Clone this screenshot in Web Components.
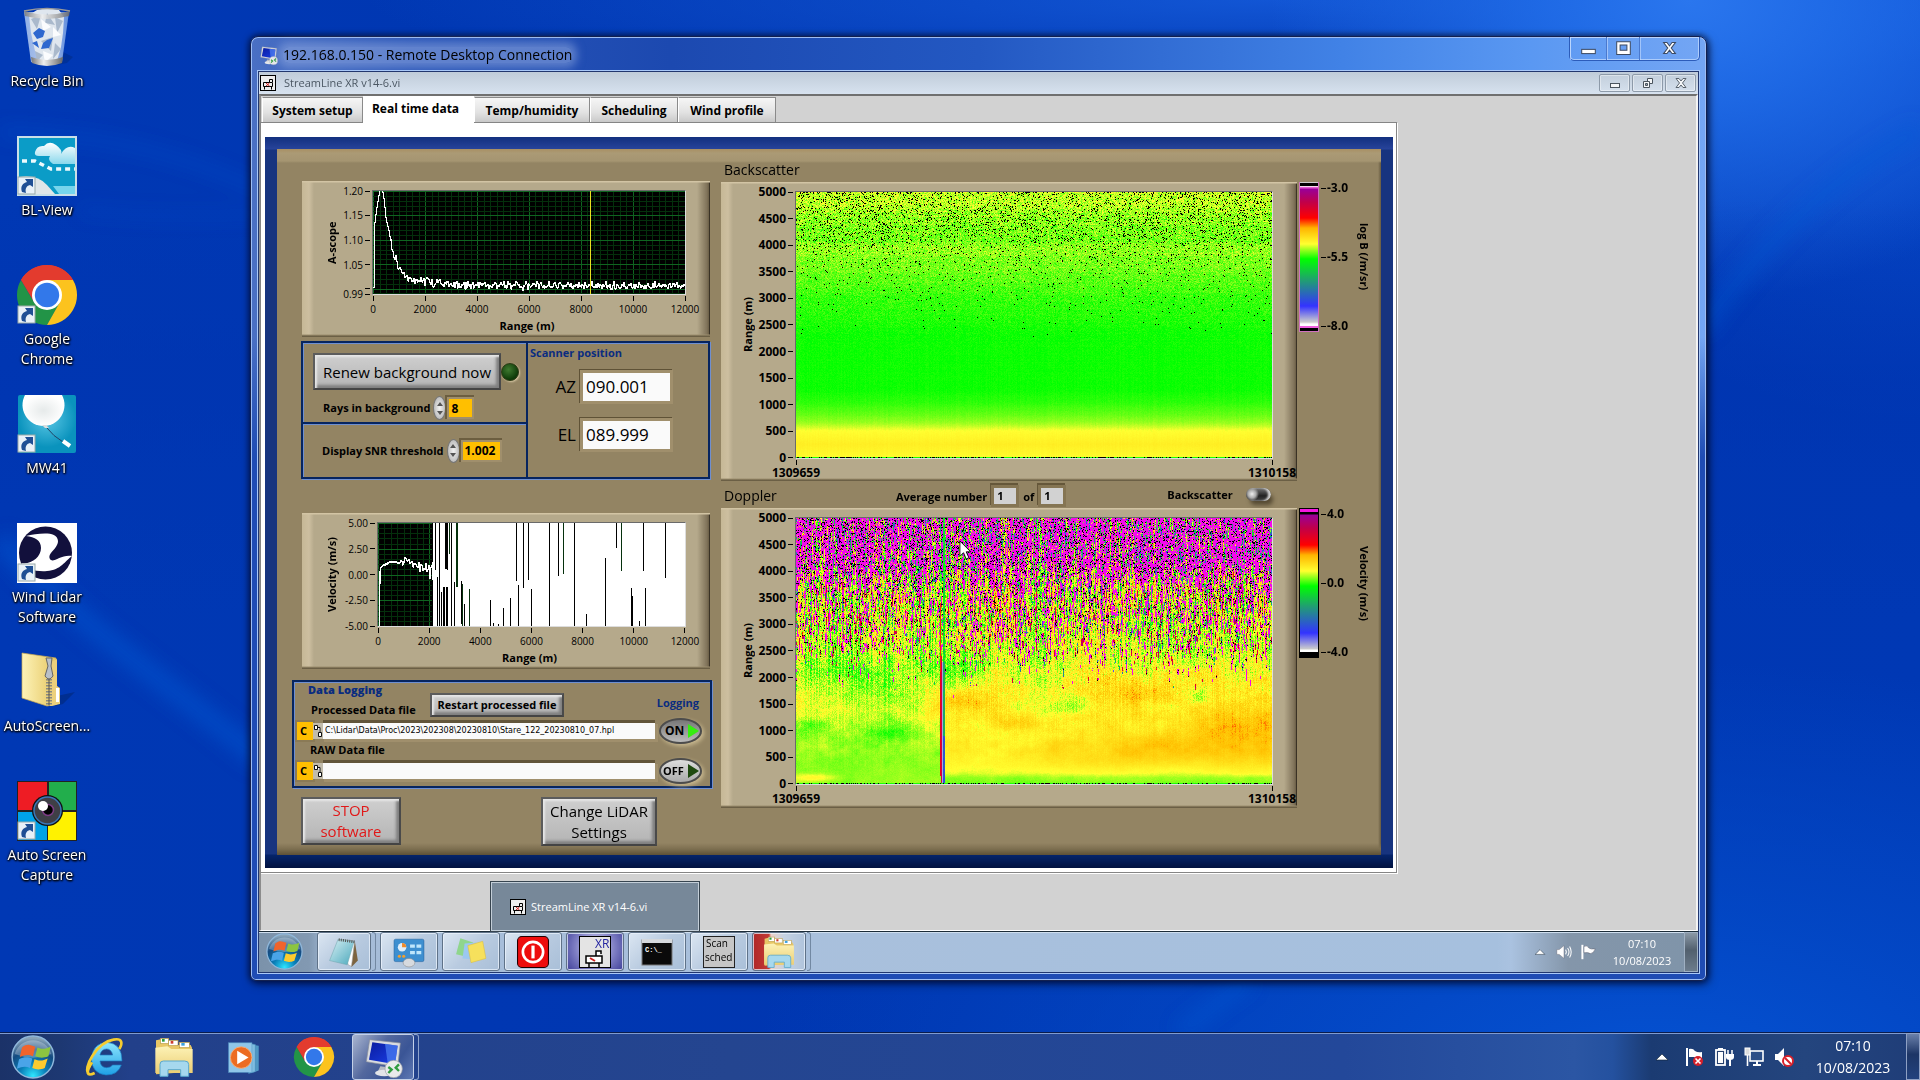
<!DOCTYPE html>
<html lang="en">
<head>
<meta charset="utf-8">
<title>Remote Desktop Connection</title>
<style>
html,body{margin:0;height:100%;overflow:hidden;background:#0038b2}
body{font-family:"Open Sans","Noto Sans",sans-serif;font-size:14px;color:#000}
</style>
</head>
<body>
<desktop-shell></desktop-shell>
<script>
const define = (name, css, html, setup) => {
  const tpl = document.createElement('template');
  customElements.define(name, class extends HTMLElement {
    connectedCallback() {
      if (this.shadowRoot) return;
      tpl.innerHTML = '<style>*{box-sizing:border-box}' + css + '</style>' + (typeof html === 'function' ? html(this) : html);
      this.attachShadow({mode: 'open'}).append(tpl.content.cloneNode(true));
      if (setup) setup(this, this.shadowRoot);
    }
  });
};
const hash = (x, y, s = 0) => {
  let h = (x * 374761393 + y * 668265263 + s * 1442695041) | 0;
  h = Math.imul(h ^ (h >>> 13), 1274126177);
  h = Math.imul(h ^ (h >>> 15), 2246822519 | 0);
  return ((h ^ (h >>> 16)) >>> 0) / 4294967296;
};
const smooth = (x, y, s) => {
  const xi = Math.floor(x), yi = Math.floor(y), a = x - xi, b = y - yi;
  const u = a * a * (3 - 2 * a), v = b * b * (3 - 2 * b);
  return (hash(xi, yi, s) * (1 - u) + hash(xi + 1, yi, s) * u) * (1 - v) + (hash(xi, yi + 1, s) * (1 - u) + hash(xi + 1, yi + 1, s) * u) * v;
};
const lerp = (pts, x) => {
  if (x <= pts[0][0]) return pts[0][1];
  for (let i = 1; i < pts.length; i++) if (x <= pts[i][0]) {
    const [x0, y0] = pts[i - 1], [x1, y1] = pts[i];
    return y0 + (y1 - y0) * (x - x0) / (x1 - x0);
  }
  return pts[pts.length - 1][1];
};

/* ---------- icons ---------- */
const arrow = '<g><rect x="1" y="41" width="17" height="17" fill="#e8f1f8" stroke="#9aa" /><path d="M5 56C3 50 6 47 10 46L8 43L16 43L16 51L13 49C9 50 8 53 9 57Z" fill="#1f4f94"/></g>';
const chrome = '<path d="M30 30L4 15A30 30 0 0 1 56 15Z" fill="#e33b2e"/><path d="M4 15A30 30 0 0 0 30 60L43 37.500L30 30L17 37Z" fill="#229447"/><path d="M56 15A30 30 0 0 1 30 60L43 37L43 22L30 15Z" fill="#fcc31e"/><path d="M4 15A30 30 0 0 1 56 15L30 15L17 37Z" fill="#e33b2e"/><circle cx="30" cy="30" r="15" fill="#fff"/><circle cx="30" cy="30" r="12.200" fill="#3278ea"/>';
const folder = '<path d="M3 5L12 3L14 7L30 8L32 12L55 12L57 16V52L3 56Z" fill="#e8c766"/><rect x="10" y="2" width="12" height="8" fill="#fff" stroke="#b99a40"/><rect x="22" y="5" width="14" height="8" fill="#fff" stroke="#b99a40"/><rect x="38" y="8" width="15" height="8" fill="#fff" stroke="#b99a40"/><rect x="12" y="3" width="4" height="4" fill="#2a9c3c"/><rect x="25" y="6" width="4" height="4" fill="#d03c30"/><rect x="41" y="9" width="5" height="4" fill="#3aa0e0"/><path d="M2 16L20 14L26 18H58V54H2Z" fill="url(#fo)"/><path d="M9 59V41Q9 36 14 36H46Q52 36 52 41V59H40V49H21V59Z" fill="#a6d8ee" stroke="#5aa8cc" stroke-width="1.500"/>';
const flag = '<path d="M14 19C22 13 25 16 32 18L29 31C22 28 18 29 11 32Z" fill="#f0642c"/><path d="M35 19C42 22 46 21 53 18L50 31C42 34 38 33 32 31Z" fill="#8cc540"/><path d="M10 35C18 31 22 32 28 34L25 47C19 44 14 45 7 48Z" fill="#4aa4e8"/><path d="M31 35C38 38 43 37 49 34L45 47C38 50 33 49 28 47Z" fill="#fccb2e"/>';
const monitor = '<path d="M26 44L42 46L44 54L22 52Z" fill="#b8bcc4"/><ellipse cx="32" cy="54" rx="14" ry="5" fill="#e2e4e8"/><path d="M10 4L56 9L52 45L5 37Z" fill="#d8dbe0" stroke="#8a8e98"/><path d="M14 8L52 13L48 41L9 34Z" fill="url(#mo)"/><path d="M33 10L52 13L48 41L37 39Z" fill="#4a7cf0" opacity=".75"/><circle cx="46" cy="48" r="13" fill="#e9eaec" stroke="#9a9ea4"/><path d="M38 45L43 49L38 54M54 41L49 46L54 51" stroke="#2f9c3f" stroke-width="3.500" fill="none"/>';
const vi = '<rect x=".500" y=".500" width="15" height="15" fill="#eee" stroke="#000"/><path d="M3.500 7.500H12.500V11.500H3.500ZM4.500 11.500V14.500M11.500 11.500V14.500M9.500 7.500V4.500H12.500V7" stroke="#000" fill="none"/><path d="M6 8L9.500 11M9.500 8L6 11" stroke="#d02020"/>';
const ICONS = {
  recycle: [60, '<defs><linearGradient id="b"><stop offset="0" stop-color="#a8c4ee"/><stop offset=".5" stop-color="#d7e4f8"/><stop offset="1" stop-color="#6f9be4"/></linearGradient><linearGradient id="m"><stop offset="0" stop-color="#777"/><stop offset=".4" stop-color="#eee"/><stop offset="1" stop-color="#666"/></linearGradient></defs><path d="M46 45L56 50L50 56L40 58Z" fill="#002a80" opacity=".5"/><path d="M7 5L14 55Q30 61 45 55L52 5Z" fill="url(#b)" opacity=".85"/><path d="M12 8L20 3L30 1L42 3L47 10L46 26L44 40L40 54L24 54L18 44L14 26Z" fill="#dfe6ee"/><path d="M14 12L24 8L20 22ZM30 6L38 18L28 16ZM38 10L46 14L40 26ZM24 34L36 30L34 44ZM18 44L26 48L20 54ZM38 36L44 42L36 52Z" fill="#aab9cc"/><path d="M24 12L34 20L26 24ZM36 20L44 28L36 30ZM26 44L36 48L28 56Z" fill="#fbfcfe"/><path d="M16 26L22 21L28 24L26 30L20 32ZM30 33L36 31L32 41L24 42L26 36ZM15 36L20 34L22 41Z" fill="#2f68cf"/><path d="M7 4Q30 11 53 4L52 9Q30 15 8 9Z" fill="url(#m)" opacity=".85"/><path d="M7 4Q30 -1 53 4" fill="none" stroke="#999" stroke-width="1.500"/><path d="M14 50Q30 56 46 50L45 56Q30 62 15 56Z" fill="url(#m)"/>'],
  blview: [60, '<defs><linearGradient id="c" x2="0" y2="1"><stop offset="0" stop-color="#fff"/><stop offset="1" stop-color="#8ad8ec"/></linearGradient></defs><rect width="60" height="60" fill="#c9dfe8"/><rect x="2" y="2" width="56" height="56" fill="#0b9cc7"/><path d="M18 16Q20 9 27 10Q32 4 39 9Q46 14 44 18Q50 8 58 12V28H36Q30 24 33 20H22Q17 20 18 16Z" fill="url(#c)"/><path d="M5 25H18L34 33H58" stroke="#eefafd" stroke-width="3.500" stroke-dasharray="5 4" fill="none"/><path d="M2 41Q20 38 30 49L38 58H2Z" fill="#dfe6e8"/><path d="M36 50H58V58H42Z" fill="#76d5ec"/>' + arrow],
  chromelink: [60, chrome + arrow], chrome: [60, chrome],
  mw41: [60, '<defs><radialGradient id="w" cx=".5" cy=".4"><stop offset="0" stop-color="#5cc8e6"/><stop offset="1" stop-color="#0a93bd"/></radialGradient><radialGradient id="wb"><stop offset="0" stop-color="#e6eaea"/><stop offset="1" stop-color="#fff"/></radialGradient></defs><rect x="1" y="1" width="58" height="58" rx="2" fill="url(#w)"/><path d="M8 1A21 21 0 1 0 45 1Z" fill="url(#wb)"/><path d="M25 31L28 34L32 34L29 31" fill="#ddd"/><path d="M30 34Q36 42 46 48" stroke="#246" fill="none"/><path d="M46 47L53 52" stroke="#fff" stroke-width="4"/>' + arrow],
  wind: [60, '<rect width="60" height="60" fill="#fff"/><circle cx="28.500" cy="30" r="26.500" fill="#12103c"/><path d="M9 13C20 11 40 7 41 18C41 26 30 30 33 36C36 41 44 31 55 33C48 38 44 47 30 48C20 49 8 46 4 40C14 42 24 34 24 25C24 17 18 14 9 13Z" fill="#fff"/>' + arrow],
  zip: [60, '<defs><linearGradient id="z"><stop offset="0" stop-color="#fdf3b8"/><stop offset="1" stop-color="#e5c560"/></linearGradient></defs><path d="M40 44L58 40L46 52L38 54Z" fill="#00236e" opacity=".5"/><path d="M5 1L39 6L40 52L30 54L5 46Z" fill="url(#z)" stroke="#c9a950" stroke-width=".7"/><path d="M33 54L34 10L40 7V34L43 36V52L35 54Z" fill="#ecd07c"/><rect x="39" y="36" width="3" height="14" fill="#fff"/><path d="M32 27V53" stroke="#8a8a80" stroke-width="6" stroke-dasharray="1.500 1.500"/><path d="M32 27V53" stroke="#555" stroke-width="1"/><path d="M29 6H35L34 14L36 24Q32 30 28 24L31 14Z" fill="#b9c0c8" stroke="#666"/>'],
  capture: [60, '<rect width="60" height="60" fill="#222"/><path d="M1 1H30V29H1Z" fill="#ee1c24"/><path d="M32 1H59V29H32Z" fill="#22ae4c"/><path d="M1 31H30V59H1Z" fill="#00a2e8"/><path d="M31 31H59V59H31Z" fill="#fff200"/><circle cx="30.500" cy="29.500" r="15.500" fill="#111"/><circle cx="30.500" cy="29.500" r="13.500" fill="#3f3f46" stroke="#3b78b8" stroke-width="1.500"/><circle cx="31" cy="29" r="5.500" fill="#000" stroke="#7d3c84" stroke-width="1.500"/><circle cx="26" cy="25" r="5" fill="#fff"/>' + arrow],
  orb: [60, '<defs><radialGradient id="o" cx=".5" cy=".95" r=".9"><stop offset="0" stop-color="#2ee6ff"/><stop offset=".35" stop-color="#0a7fb8"/><stop offset=".7" stop-color="#144a80"/><stop offset="1" stop-color="#8aa4b8"/></radialGradient></defs><circle cx="30" cy="30" r="28.500" fill="url(#o)" stroke="#8fb8dc" stroke-width="2"/><path d="M5 26A26 26 0 0 1 55 26Q30 36 5 26Z" fill="#fff" opacity=".28"/><g transform="translate(1 -2)">' + flag + '</g>'],
  ie: [60, '<defs><linearGradient id="e" x2="0" y2="1"><stop offset="0" stop-color="#8ee6fd"/><stop offset="1" stop-color="#1ea0e6"/></linearGradient></defs><path d="M57 36H24Q25 46 34 46Q40 46 43 42H56Q51 57 33 57Q12 55 11 33Q13 9 35 8Q57 10 57 36ZM24 27H43Q41 18 34 18Q26 18 24 27Z" fill="url(#e)" stroke="#1878c0"/><path d="M12 38C2 54 4 60 16 54M8 56C-4 48 20 8 44 4C58 1 58 10 53 18" fill="none" stroke="#f5cc30" stroke-width="4"/>'],
  folder: [60, '<defs><linearGradient id="fo" x2="0" y2="1"><stop offset="0" stop-color="#fcf2b6"/><stop offset="1" stop-color="#ecce74"/></linearGradient></defs>' + folder],
  wmp: [60, '<path d="M44 8L56 10V54L44 58Z" fill="#4f97c4"/><path d="M38 6L50 8V56L38 59Z" fill="#7fbce0" stroke="#3f85b5"/><rect x="3" y="5" width="41" height="52" fill="#8fc6e8" stroke="#5a9cc8"/><circle cx="25" cy="31" r="19" fill="#ec6c22" stroke="#f9b27c" stroke-width="1.500"/><path d="M18 19L38 31L18 43Z" fill="#fff"/>'],
  rdp: [60, '<defs><linearGradient id="mo" x2="1" y2="1"><stop offset="0" stop-color="#0a1ca0"/><stop offset="1" stop-color="#1a40e8"/></linearGradient></defs>' + monitor],
  vi: [16, vi],
  notepad: [60, '<defs><linearGradient id="n" x2="1" y2="1"><stop offset="0" stop-color="#d8f0f4"/><stop offset="1" stop-color="#4aa8bc"/></linearGradient></defs><path d="M50 8L56 46L44 58L40 50Z" fill="#7c6440"/><path d="M20 6L50 10L44 57L38 54Z" fill="#fff" stroke="#999"/><path d="M19 6L49 10L36 54L3 46Z" fill="url(#n)" stroke="#6fa6b0"/><path d="M20 7L50 11" stroke="#555" stroke-width="5" stroke-dasharray="2 2"/>'],
  control: [60, '<rect x="2" y="6" width="56" height="42" rx="3" fill="#3d8fd0" stroke="#1c5f9c"/><circle cx="17" cy="21" r="8" fill="#dfeefa"/><path d="M17 21V13A8 8 0 0 1 25 21Z" fill="#f08a28"/><path d="M32 16H41V22H32ZM44 16H53V22H44ZM32 28H41V34H32ZM44 28H53V34H44Z" fill="#bfe6fb"/><circle cx="12" cy="38" r="3" fill="#f0a030"/><circle cx="20" cy="38" r="3" fill="#f0a030"/><ellipse cx="30" cy="50" rx="11" ry="8" fill="#d7dade" stroke="#888"/>'],
  notes: [60, '<path d="M10 4L34 12L26 40L2 34Z" fill="#8fd68c"/><path d="M18 14L40 12L42 44L14 42Z" fill="#9cc8f0"/><path d="M24 18L52 10L58 42L30 50Z" fill="#f6e05c" stroke="#d8bc40"/>'],
  power: [60, '<rect x="1" y="1" width="58" height="58" rx="8" fill="#ee0c0c" stroke="#200" stroke-width="2"/><circle cx="30" cy="30" r="19" fill="none" stroke="#fff" stroke-width="5"/><path d="M30 18V42" stroke="#fff" stroke-width="6"/>'],
  xr: [32, '<rect x=".5" y=".5" width="31" height="31" fill="#e4e4e4" stroke="#000"/><text x="16" y="12" font-size="12" font-family="Open Sans" fill="#2222a0">XR</text><path d="M7 20H23V27H7ZM10 27V31M20 27V31M17 20V15H22V18" fill="#fff" stroke="#000" stroke-width="1.500"/><path d="M11 22L16 25" stroke="#c22" stroke-width="2"/>'],
  cmd: [32, '<rect x="1" y="4" width="30" height="25" fill="#0a0a0a" stroke="#777"/><rect x="1" y="3" width="30" height="4" fill="#d5d8dc"/><text x="4" y="16" font-size="7" font-weight="700" font-family="Liberation Mono" fill="#fff">C:\\_</text>'],
  scan: [32, '<rect x=".5" y=".5" width="31" height="31" fill="#c6c6c6" stroke="#222"/><text x="3" y="11" font-size="10" font-family="Open Sans">Scan</text><text x="2" y="25" font-size="10" font-family="Open Sans">sched</text>'],
  up: [20, '<path d="M4 13L10 7L16 13Z" fill="#fff" stroke="#123" stroke-width=".6"/>'],
  flagx: [20, '<path d="M3 1V19" stroke="#fff" stroke-width="2"/><path d="M5 2Q9 1 11 4Q14 6 18 5V11Q14 13 10 10H5Z" fill="#fff"/><circle cx="14" cy="14" r="5" fill="#d8202a"/><path d="M11.500 11.500L16.500 16.500M16.500 11.500L11.500 16.500" stroke="#fff" stroke-width="1.600"/>'],
  flagp: [20, '<path d="M3 1V19" stroke="#fff" stroke-width="2.500"/><path d="M5 3Q9 1 11 5Q14 7 19 6Q17 12 13 12Q10 10 5 11Z" fill="#fff" stroke="#445" stroke-width=".5"/>'],
  battery: [20, '<rect x="2" y="3" width="9" height="15" fill="#26406e" stroke="#fff" stroke-width="1.800"/><rect x="4" y="1" width="5" height="2" fill="#fff"/><rect x="4" y="5" width="5" height="11" fill="#fff"/><path d="M14 3V7M18 3V7" stroke="#fff" stroke-width="1.500"/><path d="M12 7H20V10Q20 13 16 13Q12 13 12 10Z" fill="#fff"/><path d="M16 12V19" stroke="#fff" stroke-width="2"/>'],
  net: [20, '<rect x="6" y="4" width="13" height="10" fill="#2c4f88" stroke="#fff" stroke-width="1.600"/><path d="M9 18H17M13 14V18" stroke="#fff" stroke-width="2"/><rect x="1" y="1" width="5" height="7" fill="#ddd" stroke="#fff"/><path d="M3.500 8V19" stroke="#fff" stroke-width="1.600"/>'],
  mute: [20, '<path d="M1 7H4L10 1V19L4 13H1Z" fill="#fff"/><circle cx="14" cy="14" r="5" fill="#fff" stroke="#d8202a" stroke-width="2"/><path d="M11 11L17 17" stroke="#d8202a" stroke-width="2"/>'],
  sound: [20, '<path d="M1 7H4L10 2V18L4 13H1Z" fill="#fff" stroke="#556" stroke-width=".5"/><path d="M12 7Q14 10 12 13M14.500 5Q18 10 14.500 15M17 3Q21 10 17 17" stroke="#fff" fill="none" stroke-width="1.300"/>'],
  min: [20, '<rect x="2" y="11" width="16" height="5" fill="#fff" stroke="#3c4a62" stroke-width="1.200"/>'],
  max: [20, '<path fill-rule="evenodd" d="M2 2H18V17H2ZM6 6V12H14V6Z" fill="#fff" stroke="#3c4a62" stroke-width="1.200"/>'],
  close: [20, '<path d="M3 3H7L10 7L13 3H17L12 9.500L17 16H13L10 12L7 16H3L8 9.500Z" fill="#fff" stroke="#3c4a62" stroke-width="1.200"/>'],
  smin: [12, '<rect x="1.500" y="6.500" width="9" height="4" fill="#f4f6f8" stroke="#4a545e"/>'],
  restore: [12, '<path d="M5.500 1.500H10.500V6.500H5.500Z" fill="#f4f6f8" stroke="#4a545e"/><path d="M1.500 4.500H7.500V10.500H1.500Z" fill="#f4f6f8" stroke="#4a545e"/><path d="M3.500 6.500H5.500V8.500H3.500Z" fill="#9aa6b4" stroke="#4a545e"/>'],
  sclose: [12, '<path d="M1 1.500H4L6 4L8 1.500H11L7.500 6L11 10.500H8L6 8L4 10.500H1L4.500 6Z" fill="#f4f6f8" stroke="#5a646e"/>'],
  path: [10, '<path d="M1.500 -.5H4.500V3.500H1.500ZM5.500 6.500H8.500V10.500H5.500ZM4.500 1.500H7V6.500" fill="#fff" stroke="#111"/>'],
  cursor: [20, '<path d="M1 0V17L5 13L8 20L11 18.500L8 12H13Z" fill="#fff" stroke="#000" stroke-width="1"/>']
};
define('glyph-icon', ':host{display:block;flex:none}svg{display:block;width:100%;height:100%;overflow:visible}', el => {
  const [s, g] = ICONS[el.getAttribute('name')];
  return `<svg viewBox="0 0 ${s} ${s}" aria-hidden="true">${g}</svg>`;
});

/* ---------- desktop ---------- */
define('desktop-icon', `
:host{display:block;height:129px}
a{display:flex;flex-direction:column;align-items:center;gap:4px;color:#fff;text-decoration:none;font-size:14px;line-height:20px;text-align:center;text-shadow:0 1px 2px #000,1px 1px 2px #000,0 0 3px #001}
glyph-icon{width:60px;height:60px}`,
el => `<a href="#"><glyph-icon name="${el.getAttribute('icon')}"></glyph-icon><span><slot></slot></span></a>`);

define('desktop-shell', `
:host{position:relative;display:flex;flex-direction:column;height:100vh;overflow:hidden;
background:linear-gradient(180deg,transparent 200px,rgba(0,52,176,.55) 380px,transparent 620px),
radial-gradient(420px 300px at 88% 0,#2a76ee 0,rgba(35,112,235,.8) 35%,rgba(10,80,210,0) 100%),
radial-gradient(900px 90px at 66% 0,rgba(24,96,224,.75),transparent),
radial-gradient(460px 420px at 100% 0,rgba(14,84,216,.85),transparent),
radial-gradient(900px 420px at 86% 100%,#0552d2 0,rgba(3,74,200,.8) 40%,transparent 100%),
linear-gradient(90deg,#0038b4,#0036b0 50%,#0038b4)}
.sky{position:absolute;inset:0;width:100%;height:100%}
main{position:relative;flex:1;min-height:0}
nav{width:94px;padding-top:7px}
remote-window{position:absolute;inset:36px 213px 51px 250px}`,
`<svg class="sky" viewBox="0 0 1920 1080" preserveAspectRatio="none" aria-hidden="true">
<defs><filter id="s"><feGaussianBlur stdDeviation="9"/></filter></defs>
<g filter="url(#s)" fill="none" stroke="#0c5cd8"><path d="M0 132Q140 134 260 190" stroke-width="8" opacity=".35"/><path d="M0 540C60 610 150 670 262 760" stroke-width="22" opacity=".45"/><path d="M80 210Q160 220 260 214" stroke-width="6" opacity=".25"/><path d="M1700 330Q1800 190 1920 130" stroke-width="20" opacity=".35"/><path d="M1180 1032Q1220 1000 1250 980" stroke-width="14" opacity=".4"/></g></svg>
<main><nav aria-label="Desktop">
<desktop-icon icon="recycle">Recycle Bin</desktop-icon>
<desktop-icon icon="blview">BL-View</desktop-icon>
<desktop-icon icon="chromelink">Google<br>Chrome</desktop-icon>
<desktop-icon icon="mw41">MW41</desktop-icon>
<desktop-icon icon="wind">Wind Lidar<br>Software</desktop-icon>
<desktop-icon icon="zip">AutoScreen...</desktop-icon>
<desktop-icon icon="capture">Auto Screen<br>Capture</desktop-icon>
</nav><remote-window></remote-window></main><host-taskbar></host-taskbar>`);

define('host-taskbar', `
:host{position:relative;display:flex;height:48px;align-items:stretch;color:#fff;border-top:1px solid #0a1c4c;box-shadow:inset 0 1px #7f9bd0;
background:linear-gradient(90deg,#1b3268 0,#1d3872 60px,#22408a 130px,#244590 38%,#23489a 70%,#2b56a4 82%,#24519f 84%,#1b3b72 86%,#24457e 94%,#1f3d78)}
button{border:0;padding:0;background:none;display:flex;align-items:center;justify-content:center;color:inherit;font:inherit}
.apps{display:flex;padding-left:11px;align-items:center}
.orb{width:44px}.orb glyph-icon{width:44px;height:44px}
.pin{width:70px}.pin glyph-icon{width:40px;height:40px}
.pin.first{margin-left:14px}
.pin .small{width:34px;height:34px}
.active{width:62px;height:46px;margin-left:3px;border:1px solid #c3d0e8;border-radius:3px;background:linear-gradient(125deg,#a9b5d0,#53689e 40%,#3a5596 70%,#5f79b4)}
.active glyph-icon{width:40px;height:40px}
.stack{width:5px;height:46px;border:solid #8ea3cc;border-width:1px 1px 1px 0;border-radius:0 3px 3px 0}
.tray{margin-left:auto;display:flex;align-items:center;gap:10px}
.tray glyph-icon{width:20px;height:20px}
.tray .upi{margin-right:2px}
time{width:98px;margin-right:-6px;text-align:center;font-size:14px;line-height:22px}
.show{width:14px;align-self:stretch;border:1px solid #8ea0c4;background:linear-gradient(#6a80aa,#1d3566 45%,#22427e)}`,
`<div class="apps"><button class="orb" aria-label="Start"><glyph-icon name="orb"></glyph-icon></button>
<button class="pin first" aria-label="Internet Explorer"><glyph-icon name="ie"></glyph-icon></button>
<button class="pin" aria-label="Explorer"><glyph-icon name="folder"></glyph-icon></button>
<button class="pin" aria-label="Media Player"><glyph-icon class="small" name="wmp"></glyph-icon></button>
<button class="pin" aria-label="Chrome"><glyph-icon name="chrome"></glyph-icon></button>
<button class="active" aria-label="Remote Desktop"><glyph-icon name="rdp"></glyph-icon></button><i class="stack"></i></div>
<div class="tray"><glyph-icon class="upi" name="up"></glyph-icon><glyph-icon name="flagx"></glyph-icon><glyph-icon name="battery"></glyph-icon><glyph-icon name="net"></glyph-icon><glyph-icon name="mute"></glyph-icon>
<time>07:10<br>10/08/2023</time><button class="show" aria-label="Show desktop"></button></div>`);

/* ---------- remote window ---------- */
define('remote-window', `
:host{display:flex;flex-direction:column;border:1px solid #13204e;border-radius:8px 8px 6px 6px;padding:0 6px 6px;
box-shadow:inset 0 0 0 1px #9dbdf4,0 0 6px 1px rgba(0,0,20,.6),2px 3px 10px rgba(0,0,30,.5);
background:linear-gradient(transparent 40px,rgba(20,70,190,.0) 300px,#1f4cb4 420px),linear-gradient(90deg,#4a70c4 0,#2a55b8 160px,#1c49b0 420px,#2358c2 50%,#4182e6 75%,#5a98f2 88%,#74a6f4)}
header{display:flex;height:33px;align-items:flex-start}
.name{display:flex;align-items:center;gap:5px;height:35px;padding-left:2px}
.name glyph-icon{width:19px;height:20px}
h1{margin:0;font-weight:400;font-size:14px;line-height:16px;background:rgba(152,176,228,.5);box-shadow:0 0 9px 5px rgba(152,176,228,.5);border-radius:6px}
.btns{margin-left:auto;display:flex;height:24px;border:1px solid #2c5cba;border-top:0;border-radius:0 0 5px 5px;box-shadow:inset 0 0 0 1px rgba(200,222,255,.7)}
.btns button{width:33px;border:0;border-left:1px solid #4a79ce;background:none;padding:0;display:grid;place-items:center;box-shadow:inset 1px 0 rgba(200,222,255,.6)}
.btns button:first-child{width:36px;border-left:0}.btns button:last-child{width:60px}
.btns glyph-icon{width:17px;height:17px}
.client{flex:1;min-height:0;display:flex;flex-direction:column;border:1px solid #22376e;outline:1px solid #a9c8f8;margin:1px;background:#d2d2d2}`,
`<header><div class="name"><glyph-icon name="rdp"></glyph-icon><h1>192.168.0.150 - Remote Desktop Connection</h1></div>
<div class="btns"><button aria-label="Minimize"><glyph-icon name="min"></glyph-icon></button><button aria-label="Maximize"><glyph-icon name="max"></glyph-icon></button><button aria-label="Close"><glyph-icon name="close"></glyph-icon></button></div></header>
<div class="client"><vi-window></vi-window><remote-taskbar></remote-taskbar></div>`);

define('remote-taskbar', `
:host{position:relative;display:flex;height:41px;border-top:1px solid #1c2c38;box-shadow:inset 0 1px #cfdeee;color:#fff;
background:linear-gradient(90deg,#7b92aa 0,#8299b2 50px,#a5bcd8 70px,#a9c0dc 500px,#a6c0de 86%,#aac2e0 87%,#8496aa 91%,#7f94a9 100%)}
button{padding:0;display:grid;place-items:center;border:1px solid #5f7288;border-radius:3px;box-shadow:inset 0 0 0 1px rgba(235,243,252,.75);background:linear-gradient(135deg,#dbe6f2,#b9cbe0 50%,#a9bfd8);width:58px;height:39px}
.apps{display:flex;gap:4px;padding-left:7px}
.apps glyph-icon{width:32px;height:32px}
.orb{width:37px;border:0;background:none;box-shadow:none;margin-right:10px}.orb glyph-icon{width:37px;height:37px}
.on{background:radial-gradient(circle at 50% 40%,#dcdcf4,#7f7fc4 55%,#3f3f98)}
.red{background:linear-gradient(90deg,#b02828,#c23a34 16px,#ead2c8 18px,#c5d2e2 60%,#b0c4dc)}
.stk{width:54px}.st{width:4px;height:39px;margin-left:-3px;border:solid #7288a2;border-width:1px 1px 1px 0;border-radius:0 3px 3px 0}
.tray{margin-left:auto;display:flex;align-items:center;gap:8px}
.tray glyph-icon{width:16px;height:16px}
time{width:76px;margin-right:-4px;text-align:center;font-size:11px;line-height:17px}
.show{width:14px;height:40px;border-radius:0;border:1px solid #9fb0c2;box-shadow:none;background:linear-gradient(#8a98a6,#52606e 45%,#6c7c8c)}
.pop{position:absolute;left:231px;bottom:40px;width:210px;height:51px;border:1px solid #37444f;box-shadow:inset 0 0 0 1px #c3ced8;background:#778899;display:flex;align-items:center;gap:5px;padding-left:19px;font-size:11px}
.pop glyph-icon{width:16px;height:16px}`,
`<div class="apps"><button class="orb" aria-label="Start"><glyph-icon name="orb"></glyph-icon></button>
<button class="stk" aria-label="Notepad"><glyph-icon name="notepad"></glyph-icon></button><i class="st"></i>
<button aria-label="Control panel"><glyph-icon name="control"></glyph-icon></button>
<button aria-label="Notes"><glyph-icon name="notes"></glyph-icon></button>
<button aria-label="Power"><glyph-icon name="power"></glyph-icon></button>
<button class="on" aria-label="StreamLine"><glyph-icon name="xr"></glyph-icon></button>
<button aria-label="Command prompt"><glyph-icon name="cmd"></glyph-icon></button>
<button aria-label="Scan scheduler"><glyph-icon name="scan"></glyph-icon></button>
<button class="red stk" aria-label="Explorer"><glyph-icon name="folder"></glyph-icon></button><i class="st"></i></div>
<div class="tray"><glyph-icon name="up"></glyph-icon><glyph-icon name="sound"></glyph-icon><glyph-icon name="flagp"></glyph-icon><time>07:10<br>10/08/2023</time><button class="show" aria-label="Show desktop"></button></div>
<div class="pop"><glyph-icon name="vi"></glyph-icon><span>StreamLine XR v14-6.vi</span></div>`);

define('vi-window', `
:host{flex:1;min-height:0;display:flex;flex-direction:column}
header{display:flex;align-items:center;height:22px;background:linear-gradient(#c0ccd9,#d7e2ef);font-size:11px;color:#4b5763}
header>glyph-icon{width:16px;height:16px;margin:0 8px 0 1px}
h2{margin:0;font-weight:400;font-size:11px;line-height:22px}
.b{margin-left:auto;display:flex;gap:2px;padding-right:2px}
.b button{width:31px;height:18px;padding:0;border:1px solid #8d9aa9;border-radius:2px;background:transparent;display:grid;place-items:center;box-shadow:inset 0 0 0 1px rgba(255,255,255,.4)}
.b glyph-icon{width:12px;height:12px}
.work{flex:1;min-height:0;border:solid;border-width:2px 2px 1px 2px;border-color:#707070 #f4f4f4 #fff #8c8c8c;padding-top:1px;background:#d2d2d2}
.tabs{display:flex;height:25px;padding-left:1px;align-items:stretch}
.tabs button{font:700 12px/24px "Open Sans","Noto Sans",sans-serif;color:#000;border:1px solid #8a8a8a;border-bottom:0;border-left-color:#fff;background:linear-gradient(#f6f6f6,#e2e2e2 60%,#c9c9c9);padding:1px 0 0}
.tabs .sel{position:relative;background:#fff;border-color:#fff;margin:-1px 0 -1px;padding:0 6px 3px 0;z-index:1}
.page{width:min(100%,1137px);border:1px solid #858585;background:#fff;padding:14px 3px 4px 4px;margin-left:-1px;box-shadow:1px 1px #fff}`,
`<header><glyph-icon name="vi"></glyph-icon><h2>StreamLine XR v14-6.vi</h2><div class="b"><button aria-label="Minimize"><glyph-icon name="smin"></glyph-icon></button><button aria-label="Restore"><glyph-icon name="restore"></glyph-icon></button><button aria-label="Close"><glyph-icon name="sclose"></glyph-icon></button></div></header>
<div class="work"><div class="tabs" role="tablist"><button role="tab" style="width:101px">System setup</button><button role="tab" class="sel" aria-selected="true" style="width:111px">Real time data</button><button role="tab" style="width:116px">Temp/humidity</button><button role="tab" style="width:88px">Scheduling</button><button role="tab" style="width:98px">Wind profile</button></div>
<div class="page"><front-panel></front-panel></div></div>`);

/* ---------- front panel ---------- */
define('front-panel', `
:host{display:block;padding:12px 12px 13px;background:linear-gradient(#12307f,#27439a 12px,transparent 13px),linear-gradient(0deg,#01123f,#05246a 13px,transparent 14px),#17347f}
.tan{display:grid;grid-template-columns:420px minmax(0,1fr);column-gap:9px;padding:0 0 9px 15px;background:linear-gradient(#a98f63,#ab9a75 4px,#a59571 12px,transparent 14px),linear-gradient(0deg,#5d5036,#7d6f50 6px,transparent 12px),linear-gradient(270deg,#665a40,transparent 3px),#938463}
.l{padding-top:32px;display:flex;flex-direction:column}
line-chart{margin:0 2px 0 10px}
control-box{margin:4px 2px 34px 9px}
data-logging{margin:11px 0 9px}
.acts{display:flex;justify-content:space-between;padding:0 55px 0 9px}
.r{padding-top:11px;display:flex;flex-direction:column}
.t{height:22px;font-size:14px;line-height:20px;padding-left:3px}
.mid{display:flex;height:27px;align-items:center;font-weight:700;font-size:11px;padding-top:3px}
.mid .d{font-weight:400;font-size:14px;width:175px;padding:0 0 1px 3px;line-height:20px}
.mid .n{width:22px;height:16px;margin:0 7px;box-shadow:0 0 0 3px #857553,-1px -2px 0 3px #65573a;border:0;border-radius:0;background:#d2d2d2;font:700 11px/16px "Open Sans",sans-serif;padding:0 0 0 3px}
.bs{margin-left:97px;padding-bottom:4px}
.sw{appearance:none;margin:0 0 4px 13px;width:25px;height:13px;border-radius:7px;background:radial-gradient(circle at 6px 6px,#eee 0,#aaa 4px,transparent 7px),linear-gradient(#777,#222 60%,#444);box-shadow:3px 5px 4px -1px #554a33,inset -3px 0 2px #ccc}
.mag{display:flex;height:299px}
.mag+.mid+.mag{height:300px}
heat-chart{flex:1;min-width:0}
.bar{margin-left:2px;width:20px;height:150px}
.bar.b{background:linear-gradient(#ccc 1px,#000 1px 4px,#f4d8ee 4px 5px,#e65cd0 5px 6px,#909 7px,#c0004a 20px,#f00 36px,#ffb400 46px,#ffff30 62px,#00ff00 77px,#20a070 98px,#3333ff 124px,#ccc 140px,#fff 142px 144px,#ee60dd 144px 146px,#000 146px 149px,#d070c0 149px);border:solid #d070c0;border-width:0 1px}
.bar.v{background:linear-gradient(#000 1px,#f318e0 1px 4px,#000 4px 6px,#909 7px,#c0004a 20px,#f00 37px,#ffb400 47px,#ffff30 63px,#00ff00 78px,#20a070 98px,#3333ff 125px,#ccc 141px,#fff 142px 144px,#000 144px);border:solid #000;border-width:0 1px}
.k{width:38px;height:138px;margin-top:6px;display:flex;flex-direction:column;justify-content:space-between;font:700 12px/0 "Open Sans",sans-serif}
.k span{height:0;display:flex;align-items:center;white-space:nowrap}
.k span::before{content:"";width:5px;height:1px;background:#000;margin:0 1px 0 2px}
.v2{writing-mode:vertical-rl;font:700 11px/14px "Open Sans",sans-serif;height:150px;text-align:center;margin:0 10px 0 0;width:14px}`,
`<div class="tan"><div class="l"><line-chart kind="scope"></line-chart><control-box></control-box><line-chart kind="velocity"></line-chart><data-logging></data-logging>
<div class="acts"><bevel-button style="--w:100px;--h:48px;--c:#e01818">STOP<br>software</bevel-button><bevel-button style="--w:116px;--h:49px">Change LiDAR<br>Settings</bevel-button></div></div>
<div class="r"><div class="t">Backscatter</div>
<div class="mag"><heat-chart kind="back"></heat-chart><div class="bar b"></div><div class="k"><span>-3.0</span><span>-5.5</span><span>-8.0</span></div><div class="v2">log B (/m/sr)</div></div>
<div class="mid"><span class="d">Doppler</span><label for="a1">Average number</label><input class="n" id="a1" value="1" readonly><label for="a2">of</label><input class="n" id="a2" value="1" readonly><label class="bs" for="sw">Backscatter</label><input class="sw" id="sw" type="checkbox"></div>
<div class="mag"><heat-chart kind="dopp"></heat-chart><div class="bar v"></div><div class="k"><span>4.0</span><span>0.0</span><span>-4.0</span></div><div class="v2">Velocity (m/s)</div></div>
</div></div>`);

const panelCss = `background:linear-gradient(#d2c4a4 1px,transparent 2px),linear-gradient(0deg,#6b5f45 1px,#9c8e6e 2px,transparent 3px),linear-gradient(90deg,#c6b896 0,#cdbfa0 7px,#b5a98b 12px calc(100% - 13px),#80735a calc(100% - 3px),#6a5e46 calc(100% - 1px),#3a3225 calc(100% - 1px));`;

define('bevel-button', `
:host{display:block}
button{width:var(--w);height:var(--h);padding:0;border:2px solid;border-color:#5c5c5c #4a4a4a #444 #5c5c5c;box-shadow:inset 2px 2px 2px #e6e6e6,inset -3px -3px 3px #7f7f7f;background:linear-gradient(#cfcfcf,#b4b4b4);color:var(--c,#000);font:var(--f,400 15px/21px "Open Sans",sans-serif);text-align:center;white-space:nowrap}`,
'<button><slot></slot></button>');

define('control-box', `
:host{display:grid;grid-template-columns:225px 1fr;height:138px;border:2px solid #06245f;box-shadow:inset 1px 1px #6f8fd0,1px 1px #6f8fd0;font:700 11px/16px "Open Sans",sans-serif}
.a{display:grid;grid-template-rows:79px 1fr;border-right:2px solid #06245f}
.a>div+div{border-top:2px solid #06245f;box-shadow:inset 0 1px #6f8fd0}
.a1{padding:10px 0 0 10px}
.ro{display:flex;align-items:center}
.led{width:18px;height:18px;border-radius:50%;background:radial-gradient(circle at 40% 35%,#3f7a30,#0d3a08 70%);border:1px solid #2a3a14;box-shadow:1px 1px 2px #d8c9a4}
.num{display:flex;align-items:center}
.sp{width:13px;height:24px;padding:0;border:1px solid #777;border-radius:50%;background:radial-gradient(#f2f2f2,#a9a9a9);display:flex;flex-direction:column;align-items:center;justify-content:center;gap:5px;margin:0 3px 0 3px}
.sp::before,.sp::after{content:"";border:3px solid transparent;border-bottom:4px solid #555;border-top:0}
.sp::after{border-bottom:0;border-top:4px solid #555}
input{border:0;border-radius:0;margin:0;font:inherit;color:#000}
.y{background:#ffbf00;height:18px;padding:0 0 0 2px;font-size:12px;box-shadow:0 0 0 2px #a08f6c,-1px -1px 0 3px #6c5e40}
.s{padding:2px 0 0 2px}
h3{margin:0;font:inherit;color:#0a2c80}
.rd{display:flex;justify-content:flex-end;align-items:center;padding-right:38px;font-size:17px;font-weight:400;height:28px;margin-top:12px}
.rd+.rd{margin-top:20px}
.rd label{margin-right:7px}
.rd input{width:87px;height:28px;background:#fafafa;font:400 17px/28px "Open Sans",sans-serif;padding:0 0 0 3px;box-shadow:0 0 0 3px #a08f6c,-1px -1px 0 3px #5f5236}`,
`<div class="a"><div class="a1"><div class="ro"><bevel-button style="--w:188px;--h:37px;--f:400 15px/30px 'Open Sans',sans-serif">Renew background now</bevel-button><i class="led"></i></div>
<div class="num" style="padding:6px 0 0 10px"><label for="n1">Rays in background</label><button class="sp" aria-label="Step"></button><input class="y" id="n1" value="8" style="width:23px"></div></div>
<div class="num" style="padding:0 0 0 19px"><label for="n2">Display SNR threshold</label><button class="sp" aria-label="Step"></button><input class="y" id="n2" value="1.002" style="width:37px"></div></div>
<div class="s"><h3>Scanner position</h3><div class="rd"><label for="az">AZ</label><input id="az" value="090.001" readonly></div><div class="rd"><label for="el">EL</label><input id="el" value="089.999" readonly></div></div>`);

define('data-logging', `
:host{display:block;height:108px;border:2px solid #06245f;box-shadow:inset 1px 1px #6f8fd0,1px 1px #6f8fd0;font:700 11px/16px "Open Sans",sans-serif;padding:0 8px 0 2px}
.top{display:flex;height:36px}
.names{width:134px;padding-left:12px}
.names b{display:block;color:#0a2c80;line-height:16px}.names label{display:block;padding:4px 0 0 3px;line-height:16px}
bevel-button{margin-top:11px}
.lg{margin-left:auto;color:#0a2c80;padding:13px 3px 0 0}
.row{display:flex;align-items:center;height:26px;padding-left:1px}
.c{width:16px;height:18px;padding:0 3px 0 0;border:0;background:#ffbf00;font:700 11px/18px "Open Sans",sans-serif;box-shadow:0 0 0 2px #8a7a56}
.row glyph-icon{width:10px;height:16px;background:#c2bcac}
input{flex:1;min-width:0;height:16px;border:0;border-radius:0;background:#fafafa;font:400 8px/16px "DejaVu Sans",sans-serif;padding:0 2px;box-shadow:2px 2px 0 1px #a08f6c,0 -3px 0 0 #62553a}
.sw{width:43px;height:26px;margin-left:4px;padding:0 0 0 4px;border:2px solid #4c4c4c;border-radius:50%;background:linear-gradient(#777,#bbb);display:flex;align-items:center;font:700 12px/20px "Open Sans",sans-serif;box-shadow:2px 2px 4px #cbbb92}
.sw::after{content:"";margin-left:auto;margin-right:1px;border:7px solid transparent;border-left:11px solid #35ee10;border-right:0}
.off{background:linear-gradient(#ddd,#aaa);padding-left:2px;font-size:11px}.off::after{border-left-color:#1f4a10}
.raw{display:block;height:14px;line-height:12px;padding-left:14px}`,
`<div class="top"><div class="names"><b>Data Logging</b><label for="p1">Processed Data file</label></div><bevel-button style="--w:134px;--h:24px;--f:700 11px/18px 'Open Sans',sans-serif">Restart processed file</bevel-button><span class="lg">Logging</span></div>
<div class="row"><button class="c">C</button><glyph-icon name="path"></glyph-icon><input id="p1" value="C:\\Lidar\\Data\\Proc\\2023\\202308\\20230810\\Stare_122_20230810_07.hpl"><button class="sw">ON</button></div>
<label class="raw" for="p2">RAW Data file</label>
<div class="row"><button class="c">C</button><glyph-icon name="path"></glyph-icon><input id="p2" value=""><button class="sw off">OFF</button></div>`);

/* ---------- line charts ---------- */
const LINE = {
  scope: {w: 313, title: 'A-scope', y: [['1.20', 24], ['1.15', 25], ['1.10', 24], ['1.05', 24], ['', 5], ['0.99', 0]], axis: 46},
  velocity: {w: 308, title: 'Velocity (m/s)', y: [['5.00', 1], ['2.50', 1], ['0.00', 1], ['-2.50', 1], ['-5.00', 0]], axis: 51}
};
const drawLine = (c, kind) => {
  const g = c.getContext('2d'), W = c.width, H = c.height, step = W / 6;
  g.fillStyle = '#000'; g.fillRect(0, 0, W, H);
  const rows = kind === 'scope' ? 24.4 : H / 4;
  for (let i = 0; i <= 48; i++) { g.fillStyle = i % 8 ? '#04300c' : '#0f6420'; g.fillRect(Math.round(i * step / 8), 0, 1, H); }
  for (let i = 0; i * rows / 5 < H; i++) { g.fillStyle = i % 5 ? '#04300c' : '#0f6420'; g.fillRect(0, Math.round(i * rows / 5), W, 1); }
  g.fillStyle = '#fff';
  const trace = (pts, amp, from, to) => {
    let prev = null;
    for (let x = from; x < to; x++) {
      const y = lerp(pts, x) + (hash(x, 1, 5) + hash(x, 2, 5) - 1) * amp(x);
      const a = prev === null ? y : Math.min(prev, y), b = prev === null ? y : Math.max(prev, y);
      g.fillRect(x, Math.round(a) - 1, 1, Math.max(2, Math.round(b - a) + 1)); prev = y;
    }
  };
  if (kind === 'scope') {
    g.fillRect(0, 96, 2, 1); g.fillRect(1, 31, 1, 66);
    trace([[1, 31], [3, 18], [5, 6], [6, -4], [8, -4], [10, 8], [12, 27], [16, 48], [20, 64], [26, 79], [32, 85], [40, 89], [53, 91], [70, 94], [110, 95], [313, 95]], x => x < 14 ? 1 : x < 30 ? 6 : 5, 1, W);
    g.fillStyle = '#e8e020'; g.fillRect(218, 0, 1, H);
  } else {
    g.fillRect(54, 0, W, H);
    g.fillRect(1, 48, 1, H);
    trace([[1, 60], [2, 46], [5, 43], [9, 40], [24, 39], [26, 36], [36, 41], [46, 45], [54, 50]], x => x < 24 ? 1.5 : x < 40 ? 5 : 9, 1, 55);
    const bars = [[455,98,215],[455,268,408],[463,98,240],[469,260,408],[475,98,408],[483,305,408],[493,98,235,3],[488,290,408,2],[499,98,240],[498,290,408,2],[506,98,190,1,1],[512,98,408],[520,275,408],[528,98,290,2,1],[541,272,400],[545,282,408,1,1],[550,340,408],[566,297,408,1,1],[628,330,408],[637,397,408],[653,400,408],[667,353,408],[688,324,408],[712,285,408],[751,297,408],[808,98,408],[883,98,408],[919,372,408],[976,204,408],[1054,294,408],[1057,318,408],[1078,393,408],[1096,292,408],[706,98,272],[727,98,293],[742,98,270],[835,98,258],[850,98,250,1,1],[1009,98,174],[1024,98,242,1,1],[1090,98,242],[1156,98,263],[1216,98,408]];
    for (const [x, a, b, w = 1, gr] of bars) { g.fillStyle = gr ? '#05300c' : '#000'; g.fillRect(Math.round((x - 293) / 3), Math.round((a - 98) / 3), w, Math.round((b - a) / 3)); }
  }
};
const axisCss = `
.y{display:flex;flex-direction:column;padding:1px 0}
.y div{min-height:0;flex-basis:0}
.y span{height:0;display:flex;align-items:center;justify-content:flex-end;white-space:nowrap}
.y span::after{content:"";width:5px;height:1px;background:#000;margin:0 2px 0 2px}
.x{display:flex;justify-content:space-between;padding:1px 1px 0}
.x span{width:0;display:flex;flex-direction:column;align-items:center;white-space:nowrap}
.x span::before{content:"";flex:none;width:1px;height:5px;background:#000}
.ti{writing-mode:vertical-rl;transform:rotate(180deg);text-align:center;width:14px;line-height:14px}
canvas{display:block;width:100%;height:100%;border:1px solid;border-color:#6a6a6a #ddd #ddd #6a6a6a;image-rendering:pixelated}`;
define('line-chart', `
:host{display:grid;height:156px;padding:9px 24px 0 23px;${panelCss}font:400 10px/16px "Open Sans",sans-serif;grid-template:105px 23px 14px/14px auto minmax(0,1fr)}
.ti,.xt{font-weight:700;font-size:11px}.xt{text-align:center;line-height:16px;grid-column:3;padding-right:4px}.x{grid-column:3}` + axisCss,
el => { const k = LINE[el.getAttribute('kind')];
  return `<div class="ti">${k.title}</div><div class="y" style="width:${k.axis - 13}px">${k.y.map(([t, f]) => `<div style="flex-grow:${f}"><span>${t}</span></div>`).join('')}</div>
<canvas width="${k.w}" height="103"></canvas><div class="x">${[0, 2000, 4000, 6000, 8000, 10000, 12000].map(t => `<span>${t}</span>`).join('')}</div><div class="xt">Range (m)</div>`; },
(el, root) => drawLine(root.querySelector('canvas'), el.getAttribute('kind')));

/* ---------- intensity charts ---------- */
const RGB = [[-4.1, [204, 204, 204]], [-2.9, [51, 51, 255]], [-1.3, [32, 160, 112]], [-.1, [0, 255, 0]], [.75, [255, 255, 48]], [1.65, [255, 190, 0]], [2.2, [255, 0, 0]], [4, [153, 0, 153]]];
const color = v => {
  if (v > 4) return [243, 10, 235];
  if (v < -4.1) return [0, 0, 0];
  for (let i = 1; i < RGB.length; i++) if (v <= RGB[i][0]) {
    const [a, p] = RGB[i - 1], [b, q] = RGB[i], t = (v - a) / (b - a);
    return p.map((n, j) => n + (q[j] - n) * t);
  }
  return RGB[7][1];
};
const backPts = [[0, .8], [250, .98], [500, .76], [650, .42], [800, .24], [1050, .04], [1300, -.06], [2300, -.06], [3000, .08], [3500, .26], [3900, .38], [4100, .3], [4600, .42], [5000, .6]];
const blob = (x, y, cx, cy, rx, ry) => Math.exp(-(((x - cx) / rx) ** 2 + ((y - cy) / ry) ** 2));
const heat = (c, kind) => {
  const g = c.getContext('2d'), W = c.width, H = c.height, im = g.createImageData(W, H);
  for (let y = 0; y < H; y++) for (let x = 0; x < W; x++) {
    const r = (H - 1 - y) / (H - 1) * 5000, n = hash(x, y, 1) + hash(x, y, 2) - 1, col = hash(x, 7, 3) - .5;
    let v;
    if (kind === 'back') {
      v = lerp(backPts, r) + n * lerp([[0, .03], [900, .05], [2000, .08], [3000, .24], [4000, .4], [5000, .5]], r) + col * .05 + (hash(3, y, 8) - .5) * lerp([[0, 0], [3000, .04], [5000, .16]], r);
      if (hash(x, y, 9) < lerp([[2150, 0], [2600, .006], [3400, .02], [3950, .05], [4100, .09], [4500, .11], [4900, .1], [5000, .18]], r)) v = -9;
      if (y === H - 1) v = hash(x, 0, 4) < .45 ? -9 : 0;
    } else {
      const big = smooth(x / 38, y / 26, 11) - .5, med = smooth(x / 13, y / 9, 12) - .5, fine = smooth(x / 5, y / 4, 13) - .5;
      const amp = lerp([[0, .3], [300, .25], [700, .7], [2000, .9], [5000, .8]], r);
      if (x < 145) {
        v = lerp([[0, .4], [300, .36], [700, .46], [1100, .55], [1400, .68], [1700, .55], [2200, .48], [2800, .6], [5000, .7]], r)
          - .4 * blob(x, r, 88, 1000, 32, 260) - .35 * blob(x, r, 75, 2000, 35, 380) + .4 * blob(x, r, 138, 1500, 16, 500) - .25 * blob(x, r, 15, 1100, 16, 150) + .5 * blob(x, r, 18, 110, 22, 70);
      } else {
        v = lerp([[0, .3], [110, .4], [200, .68], [350, .85], [600, .98], [1500, .96], [2000, .86], [2500, .7], [5000, .7]], r)
          + .4 * blob(x, r, 360, 650, 60, 320) + .6 * blob(x, r, 455, 950, 60, 650) + .4 * blob(x, r, 215, 1150, 26, 160) + .4 * blob(x, r, 340, 1750, 50, 260) + .4 * blob(x, r, 170, 1550, 22, 180)
          - .6 * blob(x, r, 400, 1650, 18, 160) - .3 * blob(x, r, 365, 1450, 22, 100) - .35 * blob(x, r, 280, 1450, 24, 160) + .2 * blob(x, r, 270, 500, 60, 300) - .5 * blob(x, r, 165, 2150, 30, 300);
      }
      v += amp * (big * .4 + med * .35 + fine * .25) + n * lerp([[0, .05], [700, .1], [1300, .25], [2000, .5], [3200, .9], [5000, 1]], r) + col * lerp([[0, 0], [800, .1], [2000, .5], [3000, 1.1], [5000, 1.6]], r);
      /* vertical streaks: each column has its own share of out-of-range samples, in short runs */
      const share = hash(x, 3, 22) * .75 + smooth(x / 14, 2, 23) * .25;
      const len = 3 + Math.floor(hash(x, 5, 29) * 7);
      const run = Math.floor((y + hash(x, 6, 30) * len) / len);
      const depth = r + (hash(x, 8, 31) - .5) * 500;
      const base = lerp([[1800, 0], [2200, .05], [2600, .26], [3200, .42], [3850, .55], [4000, .95], [5000, 1.1]], depth);
      const p = base * lerp([[0, .3], [.3, .65], [.55, 1.1], [1, 1.7]], share);
      if (hash(x, run, 24) < p && hash(x, y, 27) < .88) {
        const q = hash(x, run, 25), hi = lerp([[3000, 0], [4100, 1]], r), s = hash(x, y, 32);
        v = s < .09 + .05 * hi ? -9 : q < .6 + .26 * hi ? 5 : q < .86 ? 2 + 2 * hash(x, y, 26) : -3.4 + 3.4 * hash(x, y, 26);
      } else if (hash(x, y, 28) < lerp([[2300, 0], [3000, .04], [3900, .08], [4100, .2], [5000, .22]], r)) v = hash(x, y, 33) < .6 ? -9 : -4 + 8 * hash(x, y, 34);
      if (x === 144 && r > 150 && r < 3400) v = r < 2100 ? 2.5 : 2.1;
      if (x === 145 && r < 2400) v = 3;
      if (x === 147 || x === 148) v = r < 900 ? -2.4 + .5 * n : r < 2300 ? -1.2 + .4 * n : -.5 + n;
      if (x === 146 && r < 2300) v = -3.8;
      if (y === H - 1) v = hash(x, 0, 4) < .4 ? -9 : 0;
    }
    const k = (y * W + x) * 4, rgb = color(v);
    im.data[k] = rgb[0]; im.data[k + 1] = rgb[1]; im.data[k + 2] = rgb[2]; im.data[k + 3] = 255;
  }
  g.putImageData(im, 0, 0);
};
define('heat-chart', `
:host{position:relative;display:grid;padding:9px 24px 0 20px;${panelCss}font:700 12px/16px "Open Sans",sans-serif;grid-template:268px 1fr/14px 40px minmax(0,1fr)}
.ti{font-size:11px}.x{grid-column:3}
.cur{position:absolute;left:238px;top:33px;width:18px;height:18px}` + axisCss,
el => `<div class="ti">Range (m)</div><div class="y">${[5000, 4500, 4000, 3500, 3000, 2500, 2000, 1500, 1000, 500, 0].map((t, i) => `<div style="flex-grow:${i < 10 ? 1 : 0}"><span>${t}</span></div>`).join('')}</div>
<canvas width="476" height="266"></canvas><div class="x"><span>1309659</span><span>1310158</span></div>${el.getAttribute('kind') === 'dopp' ? '<glyph-icon class="cur" name="cursor"></glyph-icon>' : ''}`,
(el, root) => heat(root.querySelector('canvas'), el.getAttribute('kind')));
</script>
</body>
</html>
